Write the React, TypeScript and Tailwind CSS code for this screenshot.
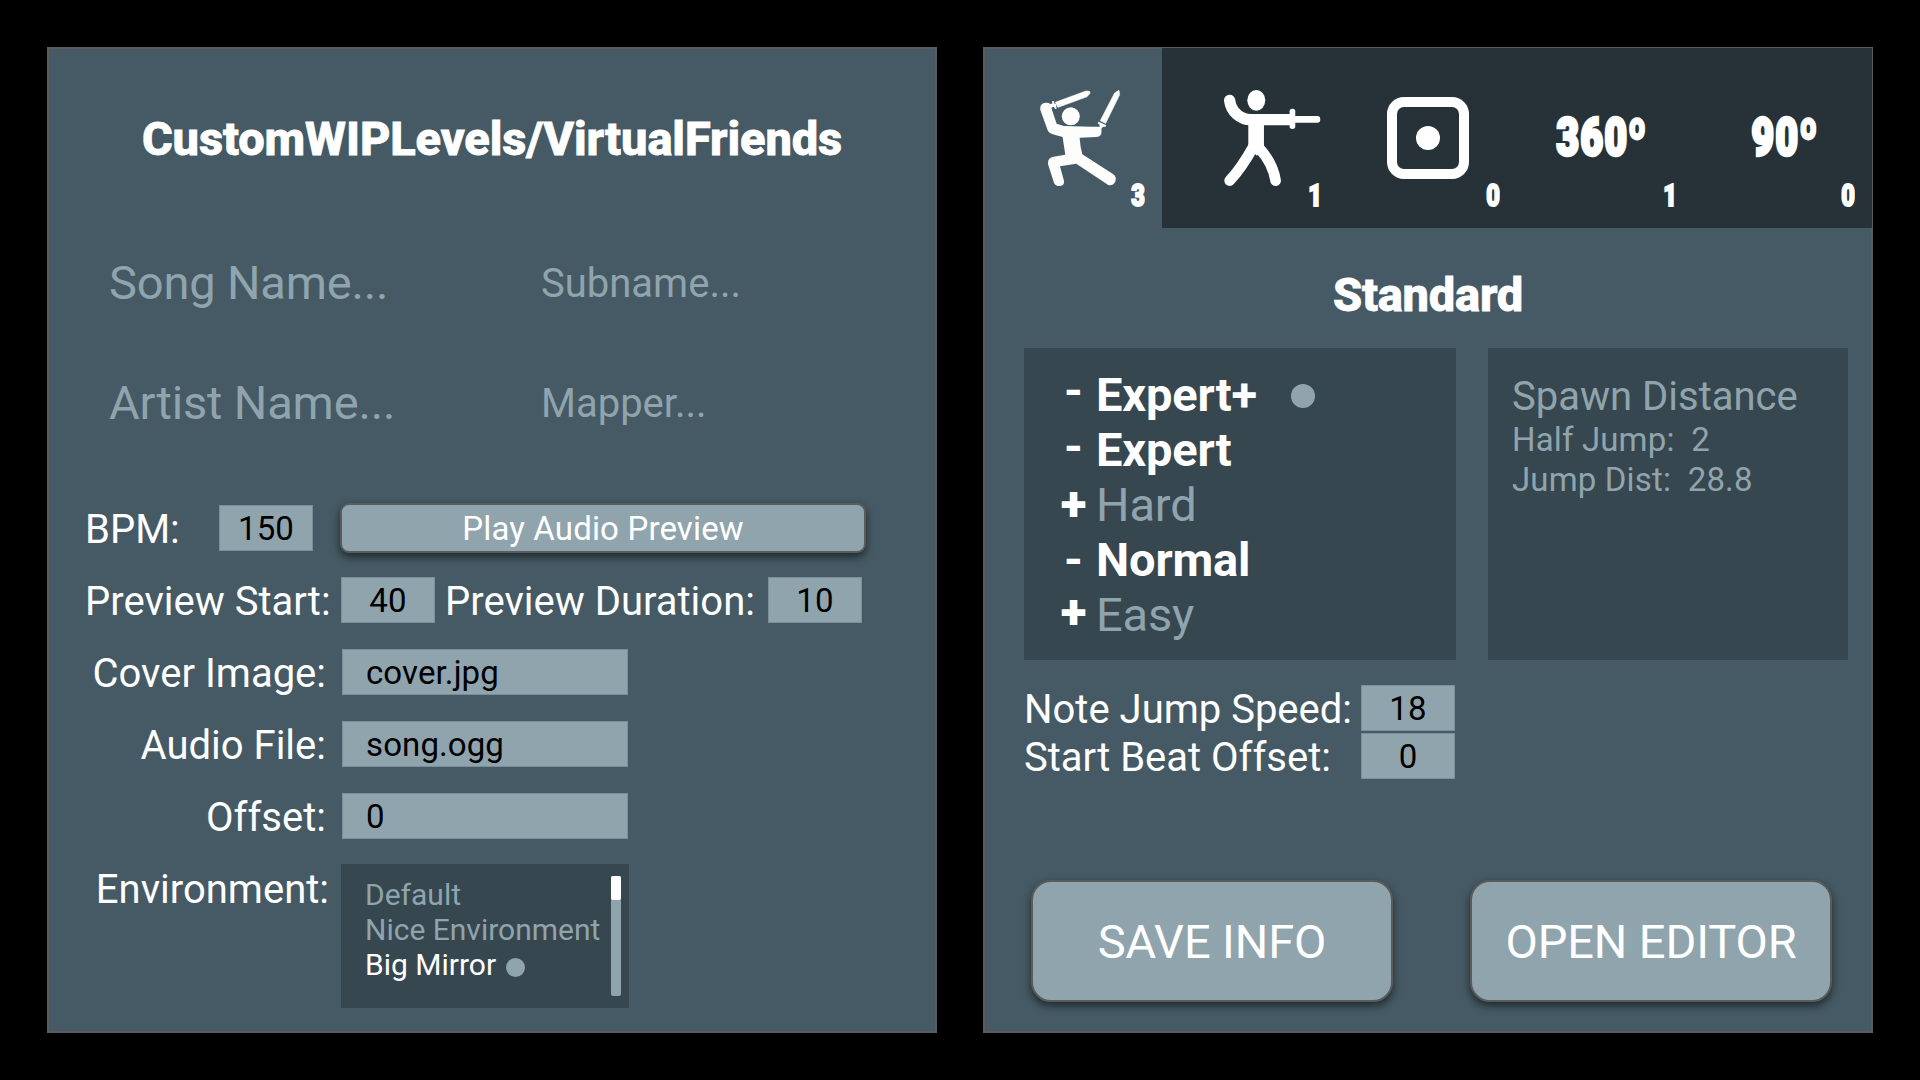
import type { ReactNode } from "react";

function NumberBox({ value }: { value: string }) {
  return (
    <div className="flex h-[46px] w-[94px] shrink-0 items-center justify-center border border-[#78909c] bg-[#90a4ae] text-[33px] leading-none tracking-[0.15px] text-black">
      {value}
    </div>
  );
}

function FileRow({ label, value }: { label: string; value: string }) {
  return (
    <div className="flex h-[72px] items-center">
      <div className="w-[278px] pt-[3px] text-right text-[40px] leading-none">{label}</div>
      <div className="ml-[16px] flex h-[46px] w-[286px] items-center border border-[#78909c] bg-[#90a4ae] pt-px pl-[23px] text-[33px] leading-none tracking-[0.1px] text-black">
        {value}
      </div>
    </div>
  );
}

function Tab({ count, active = false, children }: { count: string; active?: boolean; children: ReactNode }) {
  return (
    <div className={`relative flex h-[180px] flex-1 items-center justify-center ${active ? "" : "bg-[#263238]"}`}>
      {children}
      <span className="absolute right-[17px] bottom-[16px] origin-right scale-x-[0.76] text-[31px] leading-[32px] font-black [-webkit-text-stroke:2px_white]">
        {count}
      </span>
    </div>
  );
}

function DualSabersIcon() {
  return (
    <svg viewBox="12 24 533 540" className="h-full w-full" fill="#fdfdfb" stroke="none">
      <circle cx="272.500" cy="229" r="27" />
      <path d="M181 210Q178 190 196 188Q204 187 212 192L217 191L216 184L221 183L224 192L228 191L230 206L225 207L222 200L214 203L216 209L230 251L252 258L334 260L360 260L357 252L353 250L356 245L378 255L377 261L371 260L365 264L364 282Q360 291 348 291L299 293L302 320L307 343L399 402Q412 411 406 425Q399 438 385 435L289 371L240 379L252 422Q254 436 240 438Q227 439 222 428L204 372Q202 354 220 350L256 344L252 318L248 291L218 283Q204 278 202 268Z" />
      <g stroke="#fdfdfb" strokeWidth="2" strokeLinejoin="round">
        <path d="M226 187L318 153L329 154L330 160L321 170L234 202Z" />
        <path d="M361 242L404 159L417 151L419 164L377 250Z" />
      </g>
    </svg>
  );
}

function SingleSaberIcon() {
  return (
    <svg viewBox="545 24 533 540" className="h-full w-full" fill="white">
      <ellipse cx="828" cy="181" rx="27" ry="31" />
      <path d="M748 181C752 215 780 239 812 239L930 239" fill="none" stroke="white" strokeWidth="34" strokeLinecap="round" />
      <path d="M804 230H851V322L830 347L804 324Z" />
      <path d="M818 322C798 358 775 393 748 422" fill="none" stroke="white" strokeWidth="32" strokeLinecap="round" />
      <path d="M838 326C860 350 880 385 886 422" fill="none" stroke="white" strokeWidth="32" strokeLinecap="round" />
      <rect x="928" y="206" width="17" height="61" rx="8" />
      <rect x="938" y="228" width="82" height="20" rx="9" />
    </svg>
  );
}

function DegreeLabel({ children, className }: { children: ReactNode; className: string }) {
  return (
    <span
      className={`inline-block scale-x-[0.76] pb-[2px] text-[51px] leading-none font-black tracking-[2px] [-webkit-text-stroke:3.5px_white] ${className}`}
    >
      {children}
    </span>
  );
}

const difficulties = [
  { name: "Expert+", exists: true, selected: true, mark: "pt-0 font-bold" },
  { name: "Expert", exists: true, selected: false, mark: "pt-[1px] font-bold" },
  { name: "Hard", exists: false, selected: false, mark: "pt-[4px] font-black" },
  { name: "Normal", exists: true, selected: false, mark: "pt-[4px] font-bold" },
  { name: "Easy", exists: false, selected: false, mark: "pt-[2px] font-black" },
];

function ActionButton({ children }: { children: ReactNode }) {
  return (
    <button className="flex h-[122px] w-[362px] items-center justify-center rounded-[20px] border-2 border-[#5b5b5b] bg-[#90a4ae] text-[47px] leading-none tracking-[-0.1px] shadow-[0_4px_9px_rgba(0,0,0,0.55)]">
      {children}
    </button>
  );
}

export default function App() {
  return (
    <div className="flex h-[1080px] w-[1920px] gap-[46px] overflow-hidden bg-black py-[47px] pl-[47px] font-['Roboto',sans-serif] text-white">
      <section className="flex h-[986px] w-[890px] flex-col bg-[#455a64] p-px shadow-[inset_0_0_0_2px_#5b5b5b]">
        <h1 className="flex h-[174px] items-center justify-center pt-[6px] text-[47px] leading-none font-extrabold tracking-[-0.1px] [-webkit-text-stroke:0.8px_white]">
          CustomWIPLevels/VirtualFriends
        </h1>
        <div className="grid grid-cols-[432px_1fr] text-[#90a4ae]">
          <div className="flex h-[120px] items-center pl-[61px] text-[47px] leading-none tracking-[-0.15px]">
            Song Name...
          </div>
          <div className="flex h-[120px] items-center pt-[4px] pl-[61px] text-[40px] leading-none">Subname...</div>
          <div className="flex h-[120px] items-center pl-[61px] text-[47px] leading-none tracking-[-0.15px]">
            Artist Name...
          </div>
          <div className="flex h-[120px] items-center pt-[4px] pl-[61px] text-[40px] leading-none">Mapper...</div>
        </div>

        <div className="mt-[30px] flex h-[72px] items-center pl-[37px]">
          <div className="w-[134px] pt-[3px] text-[40px] leading-none">BPM:</div>
          <NumberBox value="150" />
          <button className="ml-[27px] flex h-[50px] w-[526px] items-center justify-center rounded-[9px] border-2 border-[#5b5b5b] bg-[#90a4ae] text-[33px] leading-none tracking-[0.15px] shadow-[0_4px_9px_rgba(0,0,0,0.55)]">
            Play Audio Preview
          </button>
        </div>
        <div className="flex h-[72px] items-center pl-[37px]">
          <div className="w-[256px] pt-[3px] text-[40px] leading-none whitespace-nowrap">Preview Start:</div>
          <NumberBox value="40" />
          <div className="w-[333px] pt-[3px] pl-[10px] text-[40px] leading-none whitespace-nowrap">Preview Duration:</div>
          <NumberBox value="10" />
        </div>
        <FileRow label="Cover Image:" value="cover.jpg" />
        <FileRow label="Audio File:" value="song.ogg" />
        <FileRow label="Offset:" value="0" />
        <div className="mt-[12px] flex">
          <div className="w-[281px] pt-[6px] text-right text-[40px] leading-[40px]">Environment:</div>
          <div className="ml-[12px] flex h-[144px] w-[288px] justify-between bg-[#37474f] py-[12px] pr-[8px] pl-[24px]">
            <ul className="pt-px text-[30px] leading-[35px] whitespace-nowrap text-[#90a4ae]">
              <li>Default</li>
              <li>Nice Environment</li>
              <li className="flex items-center text-white">
                Big Mirror
                <span className="mt-[6px] ml-[10px] h-[19px] w-[19px] rounded-full bg-[#90a4ae]" />
              </li>
            </ul>
            <div className="h-[120px] w-[10px] rounded-[2px] bg-[#90a4ae]">
              <div className="h-[24px] w-full rounded-[2px] bg-white" />
            </div>
          </div>
        </div>
      </section>

      <section className="flex h-[986px] w-[890px] flex-col bg-[#455a64] p-px shadow-[inset_0_0_0_2px_#5b5b5b]">
        <nav className="flex">
          <Tab count="3" active>
            <DualSabersIcon />
          </Tab>
          <Tab count="1">
            <SingleSaberIcon />
          </Tab>
          <Tab count="0">
            <div className="flex h-[82px] w-[82px] items-center justify-center rounded-[17px] border-[10px] border-white">
              <div className="h-[24px] w-[24px] rounded-full bg-white" />
            </div>
          </Tab>
          <Tab count="1">
            <DegreeLabel className="mr-[8px]">360º</DegreeLabel>
          </Tab>
          <Tab count="0">
            <DegreeLabel className="ml-[4px]">90º</DegreeLabel>
          </Tab>
        </nav>
        <h2 className="mt-[43px] text-center text-[47px] leading-[48px] font-extrabold tracking-[-0.2px] [-webkit-text-stroke:0.8px_white]">
          Standard
        </h2>

        <div className="mt-[29px] flex gap-[32px] pl-[40px]">
          <ul className="h-[312px] w-[432px] bg-[#37474f] pt-[19px] pl-[33px] text-[47px] leading-[55px]">
            {difficulties.map((d) => (
              <li key={d.name} className="flex h-[55px] items-start">
                <span className={`w-[33px] text-center text-[48px] leading-[48px] ${d.mark}`}>
                  {d.exists ? "-" : "+"}
                </span>
                <span className={d.exists ? "ml-[6px] font-bold tracking-[-0.15px]" : "ml-[6px] tracking-[-0.15px] text-[#90a4ae]"}>
                  {d.name}
                </span>
                {d.selected && <span className="mt-[17px] ml-[34px] h-[24px] w-[24px] rounded-full bg-[#90a4ae]" />}
              </li>
            ))}
          </ul>
          <div className="h-[312px] w-[360px] bg-[#37474f] pt-[26px] pl-[24px] text-[#90a4ae]">
            <div className="text-[40px] leading-[46px]">Spawn Distance</div>
            <div className="text-[33px] leading-[40px] tracking-[0.15px] whitespace-pre">Half Jump:  2</div>
            <div className="text-[33px] leading-[40px] tracking-[0.15px] whitespace-pre">Jump Dist:  28.8</div>
          </div>
        </div>

        <div className="mt-[25px] flex flex-col gap-[2px] pl-[40px]">
          <div className="flex h-[46px] items-center">
            <div className="w-[337px] pt-[3px] text-[40px] leading-none whitespace-nowrap">Note Jump Speed:</div>
            <NumberBox value="18" />
          </div>
          <div className="flex h-[46px] items-center">
            <div className="w-[337px] pt-[3px] text-[40px] leading-none whitespace-nowrap">Start Beat Offset:</div>
            <NumberBox value="0" />
          </div>
        </div>

        <div className="mt-[101px] flex gap-[77px] pl-[47px]">
          <ActionButton>SAVE INFO</ActionButton>
          <ActionButton>OPEN EDITOR</ActionButton>
        </div>
      </section>
    </div>
  );
}
